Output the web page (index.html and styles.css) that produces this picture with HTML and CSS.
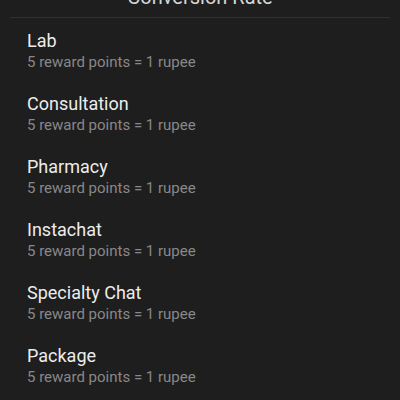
FILE: index.html
```html
<!DOCTYPE html>
<html lang="en">
<head>
    <meta charset="UTF-8">
    <meta name="viewport" content="width=device-width, initial-scale=1.0">
    <title>Conversion Rate</title>
    <link rel="stylesheet" href="styles.css">
</head>
<body>
    <div class="sheet">
        <div class="sheet-header">
            <h1>Conversion Rate</h1>
        </div>
        <ul class="rate-list">
            <li>
                <p class="rate-name">Lab</p>
                <p class="rate-value">5 reward points = 1 rupee</p>
            </li>
            <li>
                <p class="rate-name">Consultation</p>
                <p class="rate-value">5 reward points = 1 rupee</p>
            </li>
            <li>
                <p class="rate-name">Pharmacy</p>
                <p class="rate-value">5 reward points = 1 rupee</p>
            </li>
            <li>
                <p class="rate-name">Instachat</p>
                <p class="rate-value">5 reward points = 1 rupee</p>
            </li>
            <li>
                <p class="rate-name">Specialty Chat</p>
                <p class="rate-value">5 reward points = 1 rupee</p>
            </li>
            <li>
                <p class="rate-name">Package</p>
                <p class="rate-value">5 reward points = 1 rupee</p>
            </li>
        </ul>
    </div>
</body>
</html>
```

FILE: styles.css
```css
html, body {
    margin: 0;
    padding: 0;
    background-color: #1e1e1e;
}
body {
    font-family: Roboto, 'Noto Sans', Arial, sans-serif;
    color: #e6e6e6;
    overflow: hidden;
}
.sheet {
    margin-top: -15px;
}
.sheet-header {
    margin: 0 10px;
    padding-bottom: 8px;
    border-bottom: 1px solid #303030;
}
.sheet-header h1 {
    margin: 0;
    font-size: 20px;
    line-height: 24px;
    font-weight: 400;
    text-align: center;
    color: #d6d6d6;
}
.rate-list {
    list-style: none;
    margin: 0;
    padding: 0;
}
.rate-list li {
    padding: 11px 27px 8px;
}
.rate-name {
    margin: 0;
    font-size: 18px;
    line-height: 23px;
    color: #ececec;
}
.rate-value {
    margin: 0;
    font-size: 15px;
    line-height: 21px;
    color: #888888;
}
```
